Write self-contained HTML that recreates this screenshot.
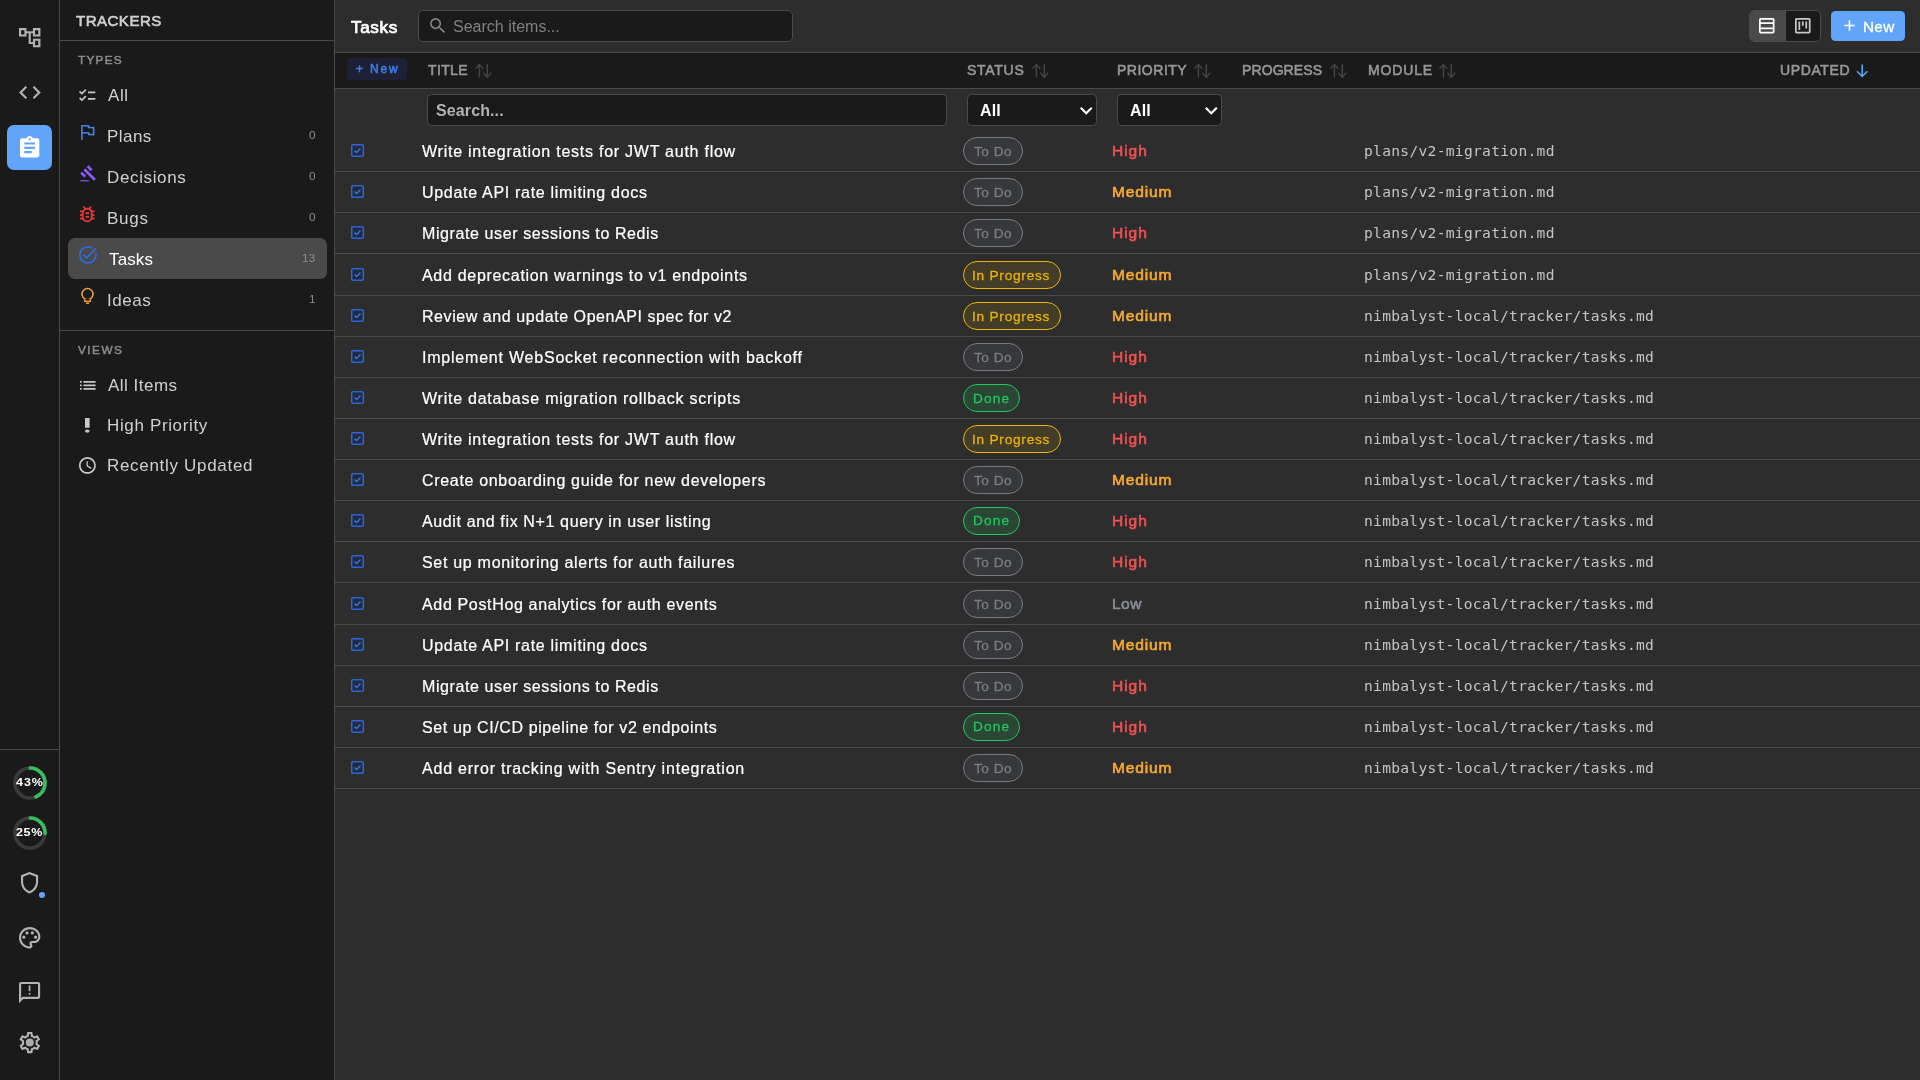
<!DOCTYPE html>
<html lang="en"><head><meta charset="utf-8"><title>Tasks - Trackers</title>
<style>
html,body{margin:0;padding:0;background:#2d2d2d;}
body{width:1920px;height:1080px;position:relative;overflow:hidden;font-family:"Liberation Sans",sans-serif;}
.b{position:absolute;}
.ic{position:absolute;display:block;overflow:visible;}
.t{position:absolute;white-space:pre;line-height:1;will-change:transform;}
</style></head>
<body>
<div class="b" style="left:0.00px;top:0.00px;width:59.00px;height:1080.00px;background:#1a1a1a"></div>
<div class="b" style="left:59.00px;top:0.00px;width:1.00px;height:1080.00px;background:#4a4a4a"></div>
<div class="b" style="left:60.00px;top:0.00px;width:274.00px;height:1080.00px;background:#1a1a1a"></div>
<div class="b" style="left:334.00px;top:0.00px;width:1.00px;height:1080.00px;background:#4a4a4a"></div>
<div class="b" style="left:335.00px;top:0.00px;width:1585.00px;height:1080.00px;background:#2d2d2d"></div>
<nav class="rail" aria-label="Navigation">
<svg class="ic" style="left:18.68px;top:27.60px;width:21.43px;height:19.29px" viewBox="2 3 20.000 18.000"><path fill="#b3b3b3" d="M22 11V3h-7v3H9V3H2v8h7V8h2v10h4v3h7v-8h-7v3h-2V8h2v3h7zM7 9H4V5h3v4zm10 6h3v4h-3v-4zm0-10h3v4h-3V5z"/></svg>
<svg class="ic" style="left:18.52px;top:85.97px;width:21.77px;height:13.06px" viewBox="2 6 20.000 12.000"><path fill="#b3b3b3" d="M9.4 16.6L4.8 12l4.6-4.6L8 6l-6 6 6 6 1.4-1.4zm5.2 0l4.6-4.6-4.6-4.6L16 6l6 6-6 6-1.4-1.4z"/></svg>
<div class="b" style="left:7.00px;top:125.00px;width:45.00px;height:45.00px;background:#60a5fa;border-radius:7px"></div>
<svg class="ic" style="left:20.08px;top:136.11px;width:19.34px;height:21.48px" viewBox="3 1 18.000 20.000"><path fill="#ffffff" d="M19 3h-4.18C14.4 1.84 13.3 1 12 1c-1.3 0-2.4.84-2.82 2H5c-1.1 0-2 .9-2 2v14c0 1.1.9 2 2 2h14c1.1 0 2-.9 2-2V5c0-1.1-.9-2-2-2zm-7 0c.55 0 1 .45 1 1s-.45 1-1 1-1-.45-1-1 .45-1 1-1zm2 14H7v-2h7v2zm3-4H7v-2h10v2zm0-4H7V7h10v2z"/></svg>
<div class="b" style="left:0.00px;top:749.00px;width:59.00px;height:1.00px;background:#4a4a4a"></div>
<svg class="ic" style="left:10px;top:762.70px;width:40px;height:40px" viewBox="0 0 40 40"><circle cx="20" cy="20" r="15.0" fill="none" stroke="#3a3a3a" stroke-width="3.6"/><circle cx="20" cy="20" r="15.0" fill="none" stroke="#36bf5f" stroke-width="3.6" stroke-linecap="round" stroke-dasharray="40.53 94.25" transform="rotate(-89 20 20)"/></svg>
<svg class="ic" style="left:10px;top:812.50px;width:40px;height:40px" viewBox="0 0 40 40"><circle cx="20" cy="20" r="15.0" fill="none" stroke="#3a3a3a" stroke-width="3.6"/><circle cx="20" cy="20" r="15.0" fill="none" stroke="#36bf5f" stroke-width="3.6" stroke-linecap="round" stroke-dasharray="23.56 94.25" transform="rotate(-89 20 20)"/></svg>
<span class="t " style="left:16.30px;top:776.62px;font-size:10.8px;font-weight:700;color:#ffffff;letter-spacing:0.833px;font-family:'Liberation Sans', sans-serif;transform:scaleX(1.16);transform-origin:0 50%;">43%</span>
<span class="t " style="left:15.82px;top:827.42px;font-size:10.8px;font-weight:700;color:#ffffff;letter-spacing:0.547px;font-family:'Liberation Sans', sans-serif;transform:scaleX(1.16);transform-origin:0 50%;">25%</span>
<svg class="ic" style="left:20.84px;top:871.65px;width:17.12px;height:21.40px" viewBox="4 2 16.000 20.000"><path fill="#b3b3b3" d="M12 2L4 5v6.09c0 5.05 3.41 9.76 8 10.91 4.59-1.15 8-5.860 8-10.91V5l-8-3zm6 9.090c0 4-2.55 7.7-6 8.83-3.45-1.13-6-4.820-6-8.83V6.390l6-2.250 6 2.250v4.7z"/></svg>
<div class="b" style="left:38.70px;top:891.70px;width:6.60px;height:6.60px;background:#60a5fa;border-radius:50%"></div>
<svg class="ic" style="left:18.85px;top:926.65px;width:21.40px;height:21.40px" viewBox="2 2 20.000 20.000"><path fill="#b3b3b3" d="M12 22C6.49 22 2 17.51 2 12S6.49 2 12 2s10 4.040 10 9c0 3.310-2.690 6-6 6h-1.770c-.28 0-.5.220-.5.5 0 .12.050.230.130.330.410.470.640 1.060.640 1.670A2.5 2.5 0 0 1 12 22zm0-18c-4.410 0-8 3.590-8 8s3.590 8 8 8c.28 0 .5-.22.5-.5a.54.54 0 0 0-.14-.35c-.41-.46-.63-1.050-.63-1.650a2.5 2.5 0 0 1 2.500-2.500H16c2.210 0 4-1.790 4-4 0-3.860-3.590-7-8-7zM6.500 10a1.500 1.500 0 1 0 0 3 1.500 1.500 0 0 0 0-3zM9.500 6a1.500 1.500 0 1 0 0 3 1.500 1.500 0 0 0 0-3zM14.500 6a1.500 1.500 0 1 0 0 3 1.500 1.500 0 0 0 0-3zM17.500 10a1.500 1.500 0 1 0 0 3 1.500 1.500 0 0 0 0-3z"/></svg>
<svg class="ic" style="left:18.98px;top:981.53px;width:21.15px;height:21.15px" viewBox="2 2 20.000 20.000"><path fill="#b3b3b3" d="M20 2H4c-1.100 0-1.990.9-1.990 2L2 22l4-4h14c1.100 0 2-.9 2-2V4c0-1.100-.9-2-2-2zm0 14H5.170l-.59.590-.58.580V4h16v12zm-8.8-3.6h1.6v1.6h-1.6zm0-7.2h1.6v5.6h-1.6z"/></svg>
<svg class="ic" style="left:18.74px;top:1031.76px;width:21.61px;height:21.19px" viewBox="1.8 2 20.400 20.000"><path fill="#b3b3b3" d="M19.430 12.980c.040-.320.070-.640.070-.980 0-.340-.030-.660-.070-.980l2.110-1.650c.190-.150.240-.420.120-.640l-2-3.460c-.090-.160-.260-.250-.440-.250-.060 0-.120.010-.170.030l-2.490 1c-.520-.4-1.080-.730-1.690-.980l-.380-2.650C14.460 2.180 14.250 2 14 2h-4c-.250 0-.460.180-.490.420l-.380 2.650c-.610.250-1.170.590-1.690.980l-2.490-1c-.060-.020-.120-.030-.180-.030-.170 0-.340.090-.430.250l-2 3.460c-.130.220-.070.490.120.640l2.110 1.650c-.040.320-.070.650-.070.980 0 .33.030.66.070.98l-2.110 1.650c-.190.150-.240.420-.120.640l2 3.460c.090.160.260.250.440.250.060 0 .12-.010.170-.030l2.490-1c.520.4 1.080.730 1.690.980l.380 2.650c.030.240.240.420.490.420h4c.250 0 .460-.180.490-.420l.380-2.650c.610-.250 1.170-.590 1.690-.980l2.490 1c.060.020.120.030.180.030.170 0 .340-.090.430-.250l2-3.460c.120-.220.070-.490-.120-.640l-2.110-1.650zm-1.980-1.710c.040.310.050.520.050.730 0 .210-.020.430-.050.730l-.14 1.130.890.7 1.080.840-.7 1.210-1.270-.510-1.040-.420-.9.680c-.430.320-.840.560-1.250.730l-1.060.430-.16 1.130-.2 1.350h-1.400l-.19-1.350-.16-1.130-1.060-.430c-.430-.180-.830-.410-1.230-.710l-.910-.7-1.060.430-1.270.510-.7-1.210 1.080-.840.890-.7-.14-1.130c-.030-.310-.050-.540-.050-.740s.020-.430.050-.730l.14-1.130-.890-.7-1.080-.840.7-1.210 1.270.510 1.040.420.9-.680c.430-.320.840-.560 1.250-.730l1.060-.430.16-1.130.2-1.350h1.390l.19 1.350.16 1.130 1.060.430c.430.180.830.410 1.230.710l.910.7 1.060-.430 1.270-.510.7 1.210-1.070.850-.890.7.14 1.130z"/><circle cx="12" cy="12" r="3.8" fill="#ababab"/></svg>
</nav>
<aside class="sidebar" aria-label="Trackers">
<span class="t " style="left:75.75px;top:13.17px;font-size:15px;font-weight:400;color:#cfcfcf;letter-spacing:0.509px;font-family:'Liberation Sans', sans-serif;-webkit-text-stroke:0.63px #cfcfcf;">TRACKERS</span>
<div class="b" style="left:60.00px;top:40.00px;width:274.00px;height:1.00px;background:#4a4a4a"></div>
<span class="t " style="left:78.10px;top:55.04px;font-size:11.8px;font-weight:400;color:#8c8c8c;letter-spacing:1.251px;font-family:'Liberation Sans', sans-serif;-webkit-text-stroke:0.50px #8c8c8c;">TYPES</span>
<svg class="ic" style="left:79.46px;top:88.65px;width:16.32px;height:12.30px" viewBox="2 3.93 20.000 15.070"><path fill="#c8c8c8" d="M22 7h-9v2h9V7zm0 8h-9v2h9v-2zM5.54 11L2 7.46l1.41-1.41 2.12 2.12 4.24-4.24 1.41 1.41L5.54 11zm0 8L2 15.46l1.41-1.41 2.12 2.12 4.24-4.24 1.41 1.41L5.54 19z"/></svg>
<span class="t " style="left:108.10px;top:86.70px;font-size:17px;font-weight:400;color:#d0d0d0;letter-spacing:0.554px;font-family:'Liberation Sans', sans-serif;">All</span>
<div class="b" style="left:68.00px;top:238.00px;width:259.00px;height:40.60px;background:#4a4a4a;border-radius:7px"></div>
<svg class="ic" style="left:81.00px;top:124.90px;width:13.60px;height:15.00px" viewBox="5 4 15.000 17.000" preserveAspectRatio="none"><path fill="#4a8df5" stroke="#1a1a1a" stroke-width="0.391" d="M12.36 6l.4 2H18v6h-3.36l-.4-2H7V6h5.36M14 4H5v17h2v-7h5.6l.4 2h7V6h-5.6L14 4z"/></svg>
<span class="t " style="left:107.46px;top:127.50px;font-size:17px;font-weight:400;color:#d0d0d0;letter-spacing:0.439px;font-family:'Liberation Sans', sans-serif;">Plans</span>
<span class="t " style="right:1604.00px;top:129.64px;font-size:11.8px;font-weight:400;color:#8c8c8c;letter-spacing:0.300px;font-family:'Liberation Sans', sans-serif;">0</span>
<svg class="ic" style="left:80.25px;top:164.55px;width:16.00px;height:16.60px" viewBox="1 1 21.200 22.000"><path fill="#8b5cf6" stroke="#1a1a1a" stroke-width="0.530" d="M1 21h12v2H1zM5.245 8.07l2.83-2.827 14.14 14.142-2.828 2.828zM12.317 1l5.657 5.656-2.83 2.83-5.654-5.66zM3.825 9.485l5.657 5.657-2.828 2.828-5.657-5.657z"/></svg>
<span class="t " style="left:107.46px;top:168.50px;font-size:17px;font-weight:400;color:#d0d0d0;letter-spacing:0.637px;font-family:'Liberation Sans', sans-serif;">Decisions</span>
<span class="t " style="right:1604.00px;top:170.64px;font-size:11.8px;font-weight:400;color:#8c8c8c;letter-spacing:0.300px;font-family:'Liberation Sans', sans-serif;">0</span>
<svg class="ic" style="left:80.23px;top:205.63px;width:14.53px;height:16.35px" viewBox="4 3 16.000 18.000"><path fill="#e53935" d="M20 8h-2.81c-.45-.78-1.07-1.45-1.82-1.96L17 4.41 15.59 3l-2.17 2.17C12.96 5.06 12.49 5 12 5c-.49 0-.96.06-1.41.17L8.41 3 7 4.41l1.62 1.63C7.88 6.55 7.26 7.22 6.81 8H4v2h2.09c-.05.33-.09.66-.09 1v1H4v2h2v1c0 .34.04.67.09 1H4v2h2.81c1.04 1.79 2.97 3 5.19 3s4.15-1.21 5.19-3H20v-2h-2.09c.05-.33.09-.66.09-1v-1h2v-2h-2v-1c0-.34-.04-.67-.09-1H20V8zm-4 4v3c0 .22-.03.47-.07.7l-.1.65-.37.65c-.72 1.24-2.04 2-3.46 2s-2.74-.77-3.46-2l-.37-.64-.1-.65C8.03 15.48 8 15.23 8 15v-4c0-.23.03-.48.07-.7l.1-.65.37-.65c.3-.52.72-.97 1.21-1.31l.57-.39.74-.18c.31-.08.63-.12.94-.12.32 0 .63.04.95.12l.68.16.61.42c.5.34.91.78 1.21 1.31l.38.65.1.65c.04.22.07.47.07.69v1zm-6 2h4v2h-4zm0-4h4v2h-4z"/></svg>
<span class="t " style="left:107.46px;top:209.60px;font-size:17px;font-weight:400;color:#d0d0d0;letter-spacing:0.779px;font-family:'Liberation Sans', sans-serif;">Bugs</span>
<span class="t " style="right:1604.00px;top:211.74px;font-size:11.8px;font-weight:400;color:#8c8c8c;letter-spacing:0.300px;font-family:'Liberation Sans', sans-serif;">0</span>
<svg class="ic" style="left:78.78px;top:245.52px;width:17.85px;height:17.85px" viewBox="2 2 20.000 20.000"><path fill="#3070ea" stroke="#4a4a4a" stroke-width="0.336" d="M22 5.18L10.59 16.6l-4.24-4.24 1.41-1.41 2.83 2.83 10-10L22 5.18zm-2.21 5.04c.13.57.21 1.17.21 1.78 0 4.42-3.58 8-8 8s-8-3.58-8-8 3.58-8 8-8c1.58 0 3.04.46 4.28 1.25l1.44-1.44C16.1 2.67 14.13 2 12 2 6.48 2 2 6.48 2 12s4.480 10 10 10 10-4.48 10-10c0-1.19-.22-2.33-.6-3.39l-1.61 1.61z"/></svg>
<span class="t " style="left:108.90px;top:251.30px;font-size:17px;font-weight:400;color:#ffffff;letter-spacing:0.139px;font-family:'Liberation Sans', sans-serif;">Tasks</span>
<span class="t " style="right:1604.00px;top:253.44px;font-size:11.8px;font-weight:400;color:#8c8c8c;letter-spacing:0.300px;font-family:'Liberation Sans', sans-serif;">13</span>
<svg class="ic" style="left:79px;top:286px;width:17px;height:20px" viewBox="79 286 17 20"><circle cx="87.5" cy="294.1" r="5.55" fill="none" stroke="#e6a23c" stroke-width="1.55"/><path fill="#e6a23c" d="M83.9 299.7h7.2v2.3h-7.2zM85.8 302.6h3.4v0.7a0.8 0.8 0 0 1-0.8 0.8h-1.8a0.8 0.8 0 0 1-0.8-0.8z"/><path fill="#1a1a1a" d="M85.4 299.0h4.2v1.6h-4.2z"/></svg>
<span class="t " style="left:107.30px;top:291.60px;font-size:17px;font-weight:400;color:#d0d0d0;letter-spacing:0.542px;font-family:'Liberation Sans', sans-serif;">Ideas</span>
<span class="t " style="right:1604.00px;top:293.74px;font-size:11.8px;font-weight:400;color:#8c8c8c;letter-spacing:0.300px;font-family:'Liberation Sans', sans-serif;">1</span>
<div class="b" style="left:60.00px;top:330.00px;width:274.00px;height:1.00px;background:#4a4a4a"></div>
<span class="t " style="left:78.00px;top:344.84px;font-size:11.8px;font-weight:400;color:#8c8c8c;letter-spacing:1.464px;font-family:'Liberation Sans', sans-serif;-webkit-text-stroke:0.50px #8c8c8c;">VIEWS</span>
<svg class="ic" style="left:79.86px;top:380.82px;width:15.58px;height:8.66px" viewBox="3 7 18.000 10.000"><path fill="#c8c8c8" d="M3 13h2v-2H3v2zm0 4h2v-2H3v2zm0-8h2V7H3v2zm4 4h14v-2H7v2zm0 4h14v-2H7v2zM7 7v2h14V7H7z"/></svg>
<span class="t " style="left:108.10px;top:376.60px;font-size:17px;font-weight:400;color:#d0d0d0;letter-spacing:0.483px;font-family:'Liberation Sans', sans-serif;">All Items</span>
<svg class="ic" style="left:85.20px;top:417.90px;width:4.60px;height:14.70px" viewBox="10 3 4.000 18.000" preserveAspectRatio="none"><path fill="#c8c8c8" d="M10 3h4v12h-4zM12 17a2 2 0 1 0 0 4 2 2 0 0 0 0-4z"/></svg>
<span class="t " style="left:106.86px;top:416.80px;font-size:17px;font-weight:400;color:#d0d0d0;letter-spacing:0.645px;font-family:'Liberation Sans', sans-serif;">High Priority</span>
<svg class="ic" style="left:79.25px;top:456.55px;width:16.80px;height:16.80px" viewBox="2 2 20.000 20.000"><path fill="#c8c8c8" d="M11.99 2C6.47 2 2 6.48 2 12s4.47 10 9.99 10C17.52 22 22 17.52 22 12S17.52 2 11.99 2zM12 20c-4.42 0-8-3.58-8-8s3.58-8 8-8 8 3.58 8 8-3.58 8-8 8zm.5-13H11v6l5.25 3.15.75-1.23-4.5-2.67z"/></svg>
<span class="t " style="left:106.86px;top:456.70px;font-size:17px;font-weight:400;color:#d0d0d0;letter-spacing:0.690px;font-family:'Liberation Sans', sans-serif;">Recently Updated</span>
</aside>
<main class="main">
<header class="toolbar">
<span class="t " style="left:350.90px;top:19.20px;font-size:17.2px;font-weight:400;color:#ffffff;letter-spacing:0.591px;font-family:'Liberation Sans', sans-serif;-webkit-text-stroke:0.72px #ffffff;">Tasks</span>
<div class="b" style="left:418.00px;top:10.00px;width:375.00px;height:32.00px;background:#1a1a1a;border:1px solid #4a4a4a;border-radius:5px;box-sizing:border-box"></div>
<svg class="ic" style="left:430.40px;top:18.40px;width:15.00px;height:15.00px" viewBox="3 3 17.490 17.490"><path fill="#8e8e8e" stroke="#1a1a1a" stroke-width="0.292" d="M15.5 14h-.79l-.28-.27C15.41 12.59 16 11.11 16 9.5 16 5.91 13.09 3 9.5 3S3 5.91 3 9.5 5.91 16 9.5 16c1.61 0 3.09-.59 4.23-1.570l.27.28v.79l5 4.990L20.490 19l-4.990-5zm-6 0C7.010 14 5 11.990 5 9.500S7.010 5 9.500 5 14 7.010 14 9.500 11.990 14 9.500 14z"/></svg>
<span class="t " style="left:452.98px;top:18.68px;font-size:16px;font-weight:400;color:#808080;letter-spacing:0.001px;font-family:'Liberation Sans', sans-serif;">Search items...</span>
<div class="b" style="left:1749.00px;top:10.00px;width:72.00px;height:32.00px;background:#1a1a1a;border:1px solid #4a4a4a;border-radius:5px;box-sizing:border-box;overflow:hidden"></div>
<div class="b" style="left:1750.00px;top:11.00px;width:36.00px;height:30.00px;background:#4a4a4a;border-radius:4px 0 0 4px"></div>
<svg class="ic" style="left:1759.23px;top:18.28px;width:15.55px;height:15.55px" viewBox="3 3 18.000 18.000"><path fill="#ffffff" d="M19 3H5c-1.100 0-2 .9-2 2v14c0 1.100.9 2 2 2h14c1.100 0 2-.9 2-2V5c0-1.100-.9-2-2-2zm0 2v3H5V5h14zm0 5v4H5v-4h14zM5 19v-3h14v3H5z"/></svg>
<svg class="ic" style="left:1794.59px;top:18.26px;width:15.58px;height:15.58px" viewBox="3 3 18.000 18.000"><path fill="#c8c8c8" d="M19 3H5c-1.100 0-2 .9-2 2v14c0 1.100.9 2 2 2h14c1.100 0 2-.9 2-2V5c0-1.100-.9-2-2-2zm0 16H5V5h14v14zM7 7h2v10H7zm4 0h2v5h-2zm4 0h2v8h-2z"/></svg>
<div class="b" style="left:1831.00px;top:11.00px;width:74.00px;height:30.00px;background:#60a5fa;border-radius:4.5px"></div>
<svg class="ic" style="left:1843.5px;top:19.9px;width:11px;height:11px" viewBox="0 0 11 11"><path d="M5.5 0.3V10.7M0.3 5.5H10.7" stroke="#fff" stroke-width="1.6" fill="none"/></svg>
<span class="t " style="left:1862.69px;top:19.13px;font-size:15.3px;font-weight:400;color:#ffffff;letter-spacing:0.293px;font-family:'Liberation Sans', sans-serif;-webkit-text-stroke:0.3px #fff;">New</span>
<div class="b" style="left:335.00px;top:52.00px;width:1585.00px;height:1.00px;background:#4a4a4a"></div>
</header>
<section class="table" role="table" aria-label="Tasks">
<div class="thead" role="row">
<div class="b" style="left:335.00px;top:53.00px;width:1585.00px;height:35.00px;background:#1a1a1a"></div>
<div class="b" style="left:335.00px;top:88.00px;width:1585.00px;height:1.00px;background:#4a4a4a"></div>
<div class="b" style="left:347.00px;top:57.80px;width:59.80px;height:22.20px;background:#1e2136;border-radius:4px"></div>
<span class="t " style="left:355.70px;top:63.74px;font-size:11.9px;font-weight:400;color:#3d80f2;letter-spacing:1.895px;font-family:'Liberation Sans', sans-serif;-webkit-text-stroke:0.50px #3d80f2;">+ New</span>
<span class="t " style="left:428.00px;top:63.46px;font-size:14px;font-weight:400;color:#969696;letter-spacing:0.344px;font-family:'Liberation Sans', sans-serif;-webkit-text-stroke:0.59px #969696;">TITLE</span>
<svg class="ic" style="left:475.25px;top:63px;width:17px;height:16px" viewBox="0 0 17 16"><path d="M4.4 14.6V1.6M0.5 5.8L4.4 1.5L8.3 5.8M12.3 1.2V14.3M8.4 9.8L12.3 14.4L16.2 9.8" stroke="#444444" stroke-width="1.5" fill="none"/></svg>
<span class="t " style="left:966.81px;top:63.46px;font-size:14px;font-weight:400;color:#969696;letter-spacing:0.726px;font-family:'Liberation Sans', sans-serif;-webkit-text-stroke:0.59px #969696;">STATUS</span>
<svg class="ic" style="left:1031.60px;top:63px;width:17px;height:16px" viewBox="0 0 17 16"><path d="M4.4 14.6V1.6M0.5 5.8L4.4 1.5L8.3 5.8M12.3 1.2V14.3M8.4 9.8L12.3 14.4L16.2 9.8" stroke="#444444" stroke-width="1.5" fill="none"/></svg>
<span class="t " style="left:1117.40px;top:63.46px;font-size:14px;font-weight:400;color:#969696;letter-spacing:0.509px;font-family:'Liberation Sans', sans-serif;-webkit-text-stroke:0.59px #969696;">PRIORITY</span>
<svg class="ic" style="left:1194.00px;top:63px;width:17px;height:16px" viewBox="0 0 17 16"><path d="M4.4 14.6V1.6M0.5 5.8L4.4 1.5L8.3 5.8M12.3 1.2V14.3M8.4 9.8L12.3 14.4L16.2 9.8" stroke="#444444" stroke-width="1.5" fill="none"/></svg>
<span class="t " style="left:1241.88px;top:63.46px;font-size:14px;font-weight:400;color:#969696;letter-spacing:0.098px;font-family:'Liberation Sans', sans-serif;-webkit-text-stroke:0.59px #969696;">PROGRESS</span>
<svg class="ic" style="left:1329.50px;top:63px;width:17px;height:16px" viewBox="0 0 17 16"><path d="M4.4 14.6V1.6M0.5 5.8L4.4 1.5L8.3 5.8M12.3 1.2V14.3M8.4 9.8L12.3 14.4L16.2 9.8" stroke="#444444" stroke-width="1.5" fill="none"/></svg>
<span class="t " style="left:1367.88px;top:63.46px;font-size:14px;font-weight:400;color:#969696;letter-spacing:0.845px;font-family:'Liberation Sans', sans-serif;-webkit-text-stroke:0.59px #969696;">MODULE</span>
<svg class="ic" style="left:1439.20px;top:63px;width:17px;height:16px" viewBox="0 0 17 16"><path d="M4.4 14.6V1.6M0.5 5.8L4.4 1.5L8.3 5.8M12.3 1.2V14.3M8.4 9.8L12.3 14.4L16.2 9.8" stroke="#444444" stroke-width="1.5" fill="none"/></svg>
<span class="t " style="left:1780.36px;top:63.46px;font-size:14px;font-weight:400;color:#969696;letter-spacing:0.629px;font-family:'Liberation Sans', sans-serif;-webkit-text-stroke:0.59px #969696;">UPDATED</span>
<svg class="ic" style="left:1856.4px;top:64px;width:12.4px;height:13.6px" viewBox="0 0 12.4 13.6"><path d="M6.2 0.6V12.4M1 7.3L6.2 12.5L11.4 7.3" stroke="#60a5fa" stroke-width="1.6" fill="none"/></svg>
</div>
<div class="filters" role="row">
<div class="b" style="left:427.00px;top:94.00px;width:520.00px;height:32.00px;background:#1a1a1a;border:1px solid #4a4a4a;border-radius:4.5px;box-sizing:border-box"></div>
<span class="t " style="left:436.20px;top:102.58px;font-size:16px;font-weight:700;color:#b0b2b6;letter-spacing:0.112px;font-family:'Liberation Sans', sans-serif;">Search...</span>
<div class="b" style="left:967.00px;top:94.00px;width:130.00px;height:32.00px;background:#1a1a1a;border:1px solid #4a4a4a;border-radius:4.5px;box-sizing:border-box"></div>
<span class="t " style="left:979.69px;top:103.48px;font-size:16px;font-weight:700;color:#ffffff;letter-spacing:0.109px;font-family:'Liberation Sans', sans-serif;">All</span>
<svg class="ic" style="left:1079.61px;top:106.54px;width:12.49px;height:7.71px" viewBox="6 8.59 12.000 7.410"><path fill="#ffffff" d="M16.590 8.590L12 13.170 7.410 8.590 6 10l6 6 6-6z"/></svg>
<div class="b" style="left:1117.00px;top:94.00px;width:105.00px;height:32.00px;background:#1a1a1a;border:1px solid #4a4a4a;border-radius:4.5px;box-sizing:border-box"></div>
<span class="t " style="left:1130.49px;top:103.48px;font-size:16px;font-weight:700;color:#ffffff;letter-spacing:0.109px;font-family:'Liberation Sans', sans-serif;">All</span>
<svg class="ic" style="left:1204.63px;top:106.53px;width:12.54px;height:7.74px" viewBox="6 8.59 12.000 7.410"><path fill="#ffffff" d="M16.590 8.590L12 13.170 7.410 8.590 6 10l6 6 6-6z"/></svg>
</div>
<div class="row" role="row">
<div class="b" style="left:335.00px;top:171.00px;width:1585.00px;height:1.00px;background:#4a4a4a"></div>
<svg class="ic" style="left:350px;top:142.90px;width:15px;height:15px" viewBox="0 0 15 15"><rect x="1.7" y="1.7" width="11.6" height="11.6" rx="1" fill="#222a40" stroke="#2c64d6" stroke-width="1.55"/><path d="M4.5 7.6L6.6 9.6L10.5 5.6" fill="none" stroke="#3a72e0" stroke-width="1.4"/></svg>
<span class="t " style="left:421.88px;top:144.43px;font-size:16px;font-weight:400;color:#ffffff;letter-spacing:0.752px;font-family:'Liberation Sans', sans-serif;-webkit-text-stroke:0.22px #fff;">Write integration tests for JWT auth flow</span>
<div class="b" style="left:963.00px;top:137.05px;width:60.00px;height:27.50px;background:rgba(125,128,136,0.13);border:1px solid #787c85;border-radius:14px;box-sizing:border-box"></div>
<span class="t " style="left:974.30px;top:145.41px;font-size:13.6px;font-weight:400;color:#787c85;letter-spacing:0.525px;font-family:'Liberation Sans', sans-serif;-webkit-text-stroke:0.3px #787c85;">To Do</span>
<span class="t " style="left:1111.94px;top:142.83px;font-size:15.5px;font-weight:400;color:#ee5050;letter-spacing:0.976px;font-family:'Liberation Sans', sans-serif;-webkit-text-stroke:0.65px #ee5050;">High</span>
<span class="t " style="left:1364.00px;top:143.79px;font-size:14.6px;font-weight:400;color:#c4c4c4;letter-spacing:0.299px;font-family:'DejaVu Sans Mono', 'Liberation Mono', monospace;">plans/v2-migration.md</span>
</div>
<div class="row" role="row">
<div class="b" style="left:335.00px;top:212.00px;width:1585.00px;height:1.00px;background:#4a4a4a"></div>
<svg class="ic" style="left:350px;top:183.90px;width:15px;height:15px" viewBox="0 0 15 15"><rect x="1.7" y="1.7" width="11.6" height="11.6" rx="1" fill="#222a40" stroke="#2c64d6" stroke-width="1.55"/><path d="M4.5 7.6L6.6 9.6L10.5 5.6" fill="none" stroke="#3a72e0" stroke-width="1.4"/></svg>
<span class="t " style="left:421.85px;top:185.43px;font-size:16px;font-weight:400;color:#ffffff;letter-spacing:0.699px;font-family:'Liberation Sans', sans-serif;-webkit-text-stroke:0.22px #fff;">Update API rate limiting docs</span>
<div class="b" style="left:963.00px;top:178.05px;width:60.00px;height:27.50px;background:rgba(125,128,136,0.13);border:1px solid #787c85;border-radius:14px;box-sizing:border-box"></div>
<span class="t " style="left:974.30px;top:186.41px;font-size:13.6px;font-weight:400;color:#787c85;letter-spacing:0.525px;font-family:'Liberation Sans', sans-serif;-webkit-text-stroke:0.3px #787c85;">To Do</span>
<span class="t " style="left:1111.94px;top:183.83px;font-size:15.5px;font-weight:400;color:#f5a92e;letter-spacing:0.879px;font-family:'Liberation Sans', sans-serif;-webkit-text-stroke:0.65px #f5a92e;">Medium</span>
<span class="t " style="left:1364.00px;top:184.79px;font-size:14.6px;font-weight:400;color:#c4c4c4;letter-spacing:0.299px;font-family:'DejaVu Sans Mono', 'Liberation Mono', monospace;">plans/v2-migration.md</span>
</div>
<div class="row" role="row">
<div class="b" style="left:335.00px;top:253.00px;width:1585.00px;height:1.00px;background:#4a4a4a"></div>
<svg class="ic" style="left:350px;top:224.90px;width:15px;height:15px" viewBox="0 0 15 15"><rect x="1.7" y="1.7" width="11.6" height="11.6" rx="1" fill="#222a40" stroke="#2c64d6" stroke-width="1.55"/><path d="M4.5 7.6L6.6 9.6L10.5 5.6" fill="none" stroke="#3a72e0" stroke-width="1.4"/></svg>
<span class="t " style="left:421.81px;top:226.43px;font-size:16px;font-weight:400;color:#ffffff;letter-spacing:0.603px;font-family:'Liberation Sans', sans-serif;-webkit-text-stroke:0.22px #fff;">Migrate user sessions to Redis</span>
<div class="b" style="left:963.00px;top:219.05px;width:60.00px;height:27.50px;background:rgba(125,128,136,0.13);border:1px solid #787c85;border-radius:14px;box-sizing:border-box"></div>
<span class="t " style="left:974.30px;top:227.41px;font-size:13.6px;font-weight:400;color:#787c85;letter-spacing:0.525px;font-family:'Liberation Sans', sans-serif;-webkit-text-stroke:0.3px #787c85;">To Do</span>
<span class="t " style="left:1111.94px;top:224.83px;font-size:15.5px;font-weight:400;color:#ee5050;letter-spacing:0.976px;font-family:'Liberation Sans', sans-serif;-webkit-text-stroke:0.65px #ee5050;">High</span>
<span class="t " style="left:1364.00px;top:225.79px;font-size:14.6px;font-weight:400;color:#c4c4c4;letter-spacing:0.299px;font-family:'DejaVu Sans Mono', 'Liberation Mono', monospace;">plans/v2-migration.md</span>
</div>
<div class="row" role="row">
<div class="b" style="left:335.00px;top:295.00px;width:1585.00px;height:1.00px;background:#4a4a4a"></div>
<svg class="ic" style="left:350px;top:266.90px;width:15px;height:15px" viewBox="0 0 15 15"><rect x="1.7" y="1.7" width="11.6" height="11.6" rx="1" fill="#222a40" stroke="#2c64d6" stroke-width="1.55"/><path d="M4.5 7.6L6.6 9.6L10.5 5.6" fill="none" stroke="#3a72e0" stroke-width="1.4"/></svg>
<span class="t " style="left:421.87px;top:268.43px;font-size:16px;font-weight:400;color:#ffffff;letter-spacing:0.695px;font-family:'Liberation Sans', sans-serif;-webkit-text-stroke:0.22px #fff;">Add deprecation warnings to v1 endpoints</span>
<div class="b" style="left:963.00px;top:261.05px;width:97.80px;height:27.50px;background:rgba(234,179,8,0.12);border:1px solid #eab308;border-radius:14px;box-sizing:border-box"></div>
<span class="t " style="left:971.89px;top:269.41px;font-size:13.6px;font-weight:400;color:#eab308;letter-spacing:0.786px;font-family:'Liberation Sans', sans-serif;-webkit-text-stroke:0.3px #eab308;">In Progress</span>
<span class="t " style="left:1111.94px;top:266.83px;font-size:15.5px;font-weight:400;color:#f5a92e;letter-spacing:0.879px;font-family:'Liberation Sans', sans-serif;-webkit-text-stroke:0.65px #f5a92e;">Medium</span>
<span class="t " style="left:1364.00px;top:267.79px;font-size:14.6px;font-weight:400;color:#c4c4c4;letter-spacing:0.299px;font-family:'DejaVu Sans Mono', 'Liberation Mono', monospace;">plans/v2-migration.md</span>
</div>
<div class="row" role="row">
<div class="b" style="left:335.00px;top:336.00px;width:1585.00px;height:1.00px;background:#4a4a4a"></div>
<svg class="ic" style="left:350px;top:307.90px;width:15px;height:15px" viewBox="0 0 15 15"><rect x="1.7" y="1.7" width="11.6" height="11.6" rx="1" fill="#222a40" stroke="#2c64d6" stroke-width="1.55"/><path d="M4.5 7.6L6.6 9.6L10.5 5.6" fill="none" stroke="#3a72e0" stroke-width="1.4"/></svg>
<span class="t " style="left:421.81px;top:309.43px;font-size:16px;font-weight:400;color:#ffffff;letter-spacing:0.566px;font-family:'Liberation Sans', sans-serif;-webkit-text-stroke:0.22px #fff;">Review and update OpenAPI spec for v2</span>
<div class="b" style="left:963.00px;top:302.05px;width:97.80px;height:27.50px;background:rgba(234,179,8,0.12);border:1px solid #eab308;border-radius:14px;box-sizing:border-box"></div>
<span class="t " style="left:971.89px;top:310.41px;font-size:13.6px;font-weight:400;color:#eab308;letter-spacing:0.786px;font-family:'Liberation Sans', sans-serif;-webkit-text-stroke:0.3px #eab308;">In Progress</span>
<span class="t " style="left:1111.94px;top:307.83px;font-size:15.5px;font-weight:400;color:#f5a92e;letter-spacing:0.879px;font-family:'Liberation Sans', sans-serif;-webkit-text-stroke:0.65px #f5a92e;">Medium</span>
<span class="t " style="left:1364.00px;top:308.79px;font-size:14.6px;font-weight:400;color:#c4c4c4;letter-spacing:0.282px;font-family:'DejaVu Sans Mono', 'Liberation Mono', monospace;">nimbalyst-local/tracker/tasks.md</span>
</div>
<div class="row" role="row">
<div class="b" style="left:335.00px;top:377.00px;width:1585.00px;height:1.00px;background:#4a4a4a"></div>
<svg class="ic" style="left:350px;top:348.90px;width:15px;height:15px" viewBox="0 0 15 15"><rect x="1.7" y="1.7" width="11.6" height="11.6" rx="1" fill="#222a40" stroke="#2c64d6" stroke-width="1.55"/><path d="M4.5 7.6L6.6 9.6L10.5 5.6" fill="none" stroke="#3a72e0" stroke-width="1.4"/></svg>
<span class="t " style="left:421.69px;top:350.43px;font-size:16px;font-weight:400;color:#ffffff;letter-spacing:0.786px;font-family:'Liberation Sans', sans-serif;-webkit-text-stroke:0.22px #fff;">Implement WebSocket reconnection with backoff</span>
<div class="b" style="left:963.00px;top:343.05px;width:60.00px;height:27.50px;background:rgba(125,128,136,0.13);border:1px solid #787c85;border-radius:14px;box-sizing:border-box"></div>
<span class="t " style="left:974.30px;top:351.41px;font-size:13.6px;font-weight:400;color:#787c85;letter-spacing:0.525px;font-family:'Liberation Sans', sans-serif;-webkit-text-stroke:0.3px #787c85;">To Do</span>
<span class="t " style="left:1111.94px;top:348.83px;font-size:15.5px;font-weight:400;color:#ee5050;letter-spacing:0.976px;font-family:'Liberation Sans', sans-serif;-webkit-text-stroke:0.65px #ee5050;">High</span>
<span class="t " style="left:1364.00px;top:349.79px;font-size:14.6px;font-weight:400;color:#c4c4c4;letter-spacing:0.282px;font-family:'DejaVu Sans Mono', 'Liberation Mono', monospace;">nimbalyst-local/tracker/tasks.md</span>
</div>
<div class="row" role="row">
<div class="b" style="left:335.00px;top:418.00px;width:1585.00px;height:1.00px;background:#4a4a4a"></div>
<svg class="ic" style="left:350px;top:389.90px;width:15px;height:15px" viewBox="0 0 15 15"><rect x="1.7" y="1.7" width="11.6" height="11.6" rx="1" fill="#222a40" stroke="#2c64d6" stroke-width="1.55"/><path d="M4.5 7.6L6.6 9.6L10.5 5.6" fill="none" stroke="#3a72e0" stroke-width="1.4"/></svg>
<span class="t " style="left:421.88px;top:391.43px;font-size:16px;font-weight:400;color:#ffffff;letter-spacing:0.759px;font-family:'Liberation Sans', sans-serif;-webkit-text-stroke:0.22px #fff;">Write database migration rollback scripts</span>
<div class="b" style="left:963.00px;top:384.05px;width:57.00px;height:27.50px;background:rgba(34,197,94,0.17);border:1px solid #22c55e;border-radius:14px;box-sizing:border-box"></div>
<span class="t " style="left:972.76px;top:392.41px;font-size:13.6px;font-weight:400;color:#22c55e;letter-spacing:1.193px;font-family:'Liberation Sans', sans-serif;-webkit-text-stroke:0.3px #22c55e;">Done</span>
<span class="t " style="left:1111.94px;top:389.83px;font-size:15.5px;font-weight:400;color:#ee5050;letter-spacing:0.976px;font-family:'Liberation Sans', sans-serif;-webkit-text-stroke:0.65px #ee5050;">High</span>
<span class="t " style="left:1364.00px;top:390.79px;font-size:14.6px;font-weight:400;color:#c4c4c4;letter-spacing:0.282px;font-family:'DejaVu Sans Mono', 'Liberation Mono', monospace;">nimbalyst-local/tracker/tasks.md</span>
</div>
<div class="row" role="row">
<div class="b" style="left:335.00px;top:459.00px;width:1585.00px;height:1.00px;background:#4a4a4a"></div>
<svg class="ic" style="left:350px;top:430.90px;width:15px;height:15px" viewBox="0 0 15 15"><rect x="1.7" y="1.7" width="11.6" height="11.6" rx="1" fill="#222a40" stroke="#2c64d6" stroke-width="1.55"/><path d="M4.5 7.6L6.6 9.6L10.5 5.6" fill="none" stroke="#3a72e0" stroke-width="1.4"/></svg>
<span class="t " style="left:421.88px;top:432.43px;font-size:16px;font-weight:400;color:#ffffff;letter-spacing:0.752px;font-family:'Liberation Sans', sans-serif;-webkit-text-stroke:0.22px #fff;">Write integration tests for JWT auth flow</span>
<div class="b" style="left:963.00px;top:425.05px;width:97.80px;height:27.50px;background:rgba(234,179,8,0.12);border:1px solid #eab308;border-radius:14px;box-sizing:border-box"></div>
<span class="t " style="left:971.89px;top:433.41px;font-size:13.6px;font-weight:400;color:#eab308;letter-spacing:0.786px;font-family:'Liberation Sans', sans-serif;-webkit-text-stroke:0.3px #eab308;">In Progress</span>
<span class="t " style="left:1111.94px;top:430.83px;font-size:15.5px;font-weight:400;color:#ee5050;letter-spacing:0.976px;font-family:'Liberation Sans', sans-serif;-webkit-text-stroke:0.65px #ee5050;">High</span>
<span class="t " style="left:1364.00px;top:431.79px;font-size:14.6px;font-weight:400;color:#c4c4c4;letter-spacing:0.282px;font-family:'DejaVu Sans Mono', 'Liberation Mono', monospace;">nimbalyst-local/tracker/tasks.md</span>
</div>
<div class="row" role="row">
<div class="b" style="left:335.00px;top:500.00px;width:1585.00px;height:1.00px;background:#4a4a4a"></div>
<svg class="ic" style="left:350px;top:471.90px;width:15px;height:15px" viewBox="0 0 15 15"><rect x="1.7" y="1.7" width="11.6" height="11.6" rx="1" fill="#222a40" stroke="#2c64d6" stroke-width="1.55"/><path d="M4.5 7.6L6.6 9.6L10.5 5.6" fill="none" stroke="#3a72e0" stroke-width="1.4"/></svg>
<span class="t " style="left:422.43px;top:473.43px;font-size:16px;font-weight:400;color:#ffffff;letter-spacing:0.674px;font-family:'Liberation Sans', sans-serif;-webkit-text-stroke:0.22px #fff;">Create onboarding guide for new developers</span>
<div class="b" style="left:963.00px;top:466.05px;width:60.00px;height:27.50px;background:rgba(125,128,136,0.13);border:1px solid #787c85;border-radius:14px;box-sizing:border-box"></div>
<span class="t " style="left:974.30px;top:474.41px;font-size:13.6px;font-weight:400;color:#787c85;letter-spacing:0.525px;font-family:'Liberation Sans', sans-serif;-webkit-text-stroke:0.3px #787c85;">To Do</span>
<span class="t " style="left:1111.94px;top:471.83px;font-size:15.5px;font-weight:400;color:#f5a92e;letter-spacing:0.879px;font-family:'Liberation Sans', sans-serif;-webkit-text-stroke:0.65px #f5a92e;">Medium</span>
<span class="t " style="left:1364.00px;top:472.79px;font-size:14.6px;font-weight:400;color:#c4c4c4;letter-spacing:0.282px;font-family:'DejaVu Sans Mono', 'Liberation Mono', monospace;">nimbalyst-local/tracker/tasks.md</span>
</div>
<div class="row" role="row">
<div class="b" style="left:335.00px;top:541.00px;width:1585.00px;height:1.00px;background:#4a4a4a"></div>
<svg class="ic" style="left:350px;top:512.90px;width:15px;height:15px" viewBox="0 0 15 15"><rect x="1.7" y="1.7" width="11.6" height="11.6" rx="1" fill="#222a40" stroke="#2c64d6" stroke-width="1.55"/><path d="M4.5 7.6L6.6 9.6L10.5 5.6" fill="none" stroke="#3a72e0" stroke-width="1.4"/></svg>
<span class="t " style="left:421.87px;top:514.43px;font-size:16px;font-weight:400;color:#ffffff;letter-spacing:0.631px;font-family:'Liberation Sans', sans-serif;-webkit-text-stroke:0.22px #fff;">Audit and fix N+1 query in user listing</span>
<div class="b" style="left:963.00px;top:507.05px;width:57.00px;height:27.50px;background:rgba(34,197,94,0.17);border:1px solid #22c55e;border-radius:14px;box-sizing:border-box"></div>
<span class="t " style="left:972.76px;top:514.41px;font-size:13.6px;font-weight:400;color:#22c55e;letter-spacing:1.193px;font-family:'Liberation Sans', sans-serif;-webkit-text-stroke:0.3px #22c55e;">Done</span>
<span class="t " style="left:1111.94px;top:512.83px;font-size:15.5px;font-weight:400;color:#ee5050;letter-spacing:0.976px;font-family:'Liberation Sans', sans-serif;-webkit-text-stroke:0.65px #ee5050;">High</span>
<span class="t " style="left:1364.00px;top:513.79px;font-size:14.6px;font-weight:400;color:#c4c4c4;letter-spacing:0.282px;font-family:'DejaVu Sans Mono', 'Liberation Mono', monospace;">nimbalyst-local/tracker/tasks.md</span>
</div>
<div class="row" role="row">
<div class="b" style="left:335.00px;top:582.00px;width:1585.00px;height:1.00px;background:#4a4a4a"></div>
<svg class="ic" style="left:350px;top:553.90px;width:15px;height:15px" viewBox="0 0 15 15"><rect x="1.7" y="1.7" width="11.6" height="11.6" rx="1" fill="#222a40" stroke="#2c64d6" stroke-width="1.55"/><path d="M4.5 7.6L6.6 9.6L10.5 5.6" fill="none" stroke="#3a72e0" stroke-width="1.4"/></svg>
<span class="t " style="left:422.30px;top:555.43px;font-size:16px;font-weight:400;color:#ffffff;letter-spacing:0.703px;font-family:'Liberation Sans', sans-serif;-webkit-text-stroke:0.22px #fff;">Set up monitoring alerts for auth failures</span>
<div class="b" style="left:963.00px;top:548.05px;width:60.00px;height:27.50px;background:rgba(125,128,136,0.13);border:1px solid #787c85;border-radius:14px;box-sizing:border-box"></div>
<span class="t " style="left:974.30px;top:556.41px;font-size:13.6px;font-weight:400;color:#787c85;letter-spacing:0.525px;font-family:'Liberation Sans', sans-serif;-webkit-text-stroke:0.3px #787c85;">To Do</span>
<span class="t " style="left:1111.94px;top:553.83px;font-size:15.5px;font-weight:400;color:#ee5050;letter-spacing:0.976px;font-family:'Liberation Sans', sans-serif;-webkit-text-stroke:0.65px #ee5050;">High</span>
<span class="t " style="left:1364.00px;top:554.79px;font-size:14.6px;font-weight:400;color:#c4c4c4;letter-spacing:0.282px;font-family:'DejaVu Sans Mono', 'Liberation Mono', monospace;">nimbalyst-local/tracker/tasks.md</span>
</div>
<div class="row" role="row">
<div class="b" style="left:335.00px;top:624.00px;width:1585.00px;height:1.00px;background:#4a4a4a"></div>
<svg class="ic" style="left:350px;top:595.90px;width:15px;height:15px" viewBox="0 0 15 15"><rect x="1.7" y="1.7" width="11.6" height="11.6" rx="1" fill="#222a40" stroke="#2c64d6" stroke-width="1.55"/><path d="M4.5 7.6L6.6 9.6L10.5 5.6" fill="none" stroke="#3a72e0" stroke-width="1.4"/></svg>
<span class="t " style="left:421.87px;top:597.43px;font-size:16px;font-weight:400;color:#ffffff;letter-spacing:0.655px;font-family:'Liberation Sans', sans-serif;-webkit-text-stroke:0.22px #fff;">Add PostHog analytics for auth events</span>
<div class="b" style="left:963.00px;top:590.05px;width:60.00px;height:27.50px;background:rgba(125,128,136,0.13);border:1px solid #787c85;border-radius:14px;box-sizing:border-box"></div>
<span class="t " style="left:974.30px;top:598.41px;font-size:13.6px;font-weight:400;color:#787c85;letter-spacing:0.525px;font-family:'Liberation Sans', sans-serif;-webkit-text-stroke:0.3px #787c85;">To Do</span>
<span class="t " style="left:1111.94px;top:595.83px;font-size:15.5px;font-weight:400;color:#888c95;letter-spacing:0.476px;font-family:'Liberation Sans', sans-serif;-webkit-text-stroke:0.65px #888c95;">Low</span>
<span class="t " style="left:1364.00px;top:596.79px;font-size:14.6px;font-weight:400;color:#c4c4c4;letter-spacing:0.282px;font-family:'DejaVu Sans Mono', 'Liberation Mono', monospace;">nimbalyst-local/tracker/tasks.md</span>
</div>
<div class="row" role="row">
<div class="b" style="left:335.00px;top:665.00px;width:1585.00px;height:1.00px;background:#4a4a4a"></div>
<svg class="ic" style="left:350px;top:636.90px;width:15px;height:15px" viewBox="0 0 15 15"><rect x="1.7" y="1.7" width="11.6" height="11.6" rx="1" fill="#222a40" stroke="#2c64d6" stroke-width="1.55"/><path d="M4.5 7.6L6.6 9.6L10.5 5.6" fill="none" stroke="#3a72e0" stroke-width="1.4"/></svg>
<span class="t " style="left:421.85px;top:638.43px;font-size:16px;font-weight:400;color:#ffffff;letter-spacing:0.699px;font-family:'Liberation Sans', sans-serif;-webkit-text-stroke:0.22px #fff;">Update API rate limiting docs</span>
<div class="b" style="left:963.00px;top:631.05px;width:60.00px;height:27.50px;background:rgba(125,128,136,0.13);border:1px solid #787c85;border-radius:14px;box-sizing:border-box"></div>
<span class="t " style="left:974.30px;top:639.41px;font-size:13.6px;font-weight:400;color:#787c85;letter-spacing:0.525px;font-family:'Liberation Sans', sans-serif;-webkit-text-stroke:0.3px #787c85;">To Do</span>
<span class="t " style="left:1111.94px;top:636.83px;font-size:15.5px;font-weight:400;color:#f5a92e;letter-spacing:0.879px;font-family:'Liberation Sans', sans-serif;-webkit-text-stroke:0.65px #f5a92e;">Medium</span>
<span class="t " style="left:1364.00px;top:637.79px;font-size:14.6px;font-weight:400;color:#c4c4c4;letter-spacing:0.282px;font-family:'DejaVu Sans Mono', 'Liberation Mono', monospace;">nimbalyst-local/tracker/tasks.md</span>
</div>
<div class="row" role="row">
<div class="b" style="left:335.00px;top:706.00px;width:1585.00px;height:1.00px;background:#4a4a4a"></div>
<svg class="ic" style="left:350px;top:677.90px;width:15px;height:15px" viewBox="0 0 15 15"><rect x="1.7" y="1.7" width="11.6" height="11.6" rx="1" fill="#222a40" stroke="#2c64d6" stroke-width="1.55"/><path d="M4.5 7.6L6.6 9.6L10.5 5.6" fill="none" stroke="#3a72e0" stroke-width="1.4"/></svg>
<span class="t " style="left:421.81px;top:679.43px;font-size:16px;font-weight:400;color:#ffffff;letter-spacing:0.603px;font-family:'Liberation Sans', sans-serif;-webkit-text-stroke:0.22px #fff;">Migrate user sessions to Redis</span>
<div class="b" style="left:963.00px;top:672.05px;width:60.00px;height:27.50px;background:rgba(125,128,136,0.13);border:1px solid #787c85;border-radius:14px;box-sizing:border-box"></div>
<span class="t " style="left:974.30px;top:680.41px;font-size:13.6px;font-weight:400;color:#787c85;letter-spacing:0.525px;font-family:'Liberation Sans', sans-serif;-webkit-text-stroke:0.3px #787c85;">To Do</span>
<span class="t " style="left:1111.94px;top:677.83px;font-size:15.5px;font-weight:400;color:#ee5050;letter-spacing:0.976px;font-family:'Liberation Sans', sans-serif;-webkit-text-stroke:0.65px #ee5050;">High</span>
<span class="t " style="left:1364.00px;top:678.79px;font-size:14.6px;font-weight:400;color:#c4c4c4;letter-spacing:0.282px;font-family:'DejaVu Sans Mono', 'Liberation Mono', monospace;">nimbalyst-local/tracker/tasks.md</span>
</div>
<div class="row" role="row">
<div class="b" style="left:335.00px;top:747.00px;width:1585.00px;height:1.00px;background:#4a4a4a"></div>
<svg class="ic" style="left:350px;top:718.90px;width:15px;height:15px" viewBox="0 0 15 15"><rect x="1.7" y="1.7" width="11.6" height="11.6" rx="1" fill="#222a40" stroke="#2c64d6" stroke-width="1.55"/><path d="M4.5 7.6L6.6 9.6L10.5 5.6" fill="none" stroke="#3a72e0" stroke-width="1.4"/></svg>
<span class="t " style="left:422.30px;top:720.43px;font-size:16px;font-weight:400;color:#ffffff;letter-spacing:0.611px;font-family:'Liberation Sans', sans-serif;-webkit-text-stroke:0.22px #fff;">Set up CI/CD pipeline for v2 endpoints</span>
<div class="b" style="left:963.00px;top:713.05px;width:57.00px;height:27.50px;background:rgba(34,197,94,0.17);border:1px solid #22c55e;border-radius:14px;box-sizing:border-box"></div>
<span class="t " style="left:972.76px;top:720.41px;font-size:13.6px;font-weight:400;color:#22c55e;letter-spacing:1.193px;font-family:'Liberation Sans', sans-serif;-webkit-text-stroke:0.3px #22c55e;">Done</span>
<span class="t " style="left:1111.94px;top:718.83px;font-size:15.5px;font-weight:400;color:#ee5050;letter-spacing:0.976px;font-family:'Liberation Sans', sans-serif;-webkit-text-stroke:0.65px #ee5050;">High</span>
<span class="t " style="left:1364.00px;top:719.79px;font-size:14.6px;font-weight:400;color:#c4c4c4;letter-spacing:0.282px;font-family:'DejaVu Sans Mono', 'Liberation Mono', monospace;">nimbalyst-local/tracker/tasks.md</span>
</div>
<div class="row" role="row">
<div class="b" style="left:335.00px;top:788.00px;width:1585.00px;height:1.00px;background:#4a4a4a"></div>
<svg class="ic" style="left:350px;top:759.90px;width:15px;height:15px" viewBox="0 0 15 15"><rect x="1.7" y="1.7" width="11.6" height="11.6" rx="1" fill="#222a40" stroke="#2c64d6" stroke-width="1.55"/><path d="M4.5 7.6L6.6 9.6L10.5 5.6" fill="none" stroke="#3a72e0" stroke-width="1.4"/></svg>
<span class="t " style="left:421.87px;top:761.43px;font-size:16px;font-weight:400;color:#ffffff;letter-spacing:0.788px;font-family:'Liberation Sans', sans-serif;-webkit-text-stroke:0.22px #fff;">Add error tracking with Sentry integration</span>
<div class="b" style="left:963.00px;top:754.05px;width:60.00px;height:27.50px;background:rgba(125,128,136,0.13);border:1px solid #787c85;border-radius:14px;box-sizing:border-box"></div>
<span class="t " style="left:974.30px;top:762.41px;font-size:13.6px;font-weight:400;color:#787c85;letter-spacing:0.525px;font-family:'Liberation Sans', sans-serif;-webkit-text-stroke:0.3px #787c85;">To Do</span>
<span class="t " style="left:1111.94px;top:759.83px;font-size:15.5px;font-weight:400;color:#f5a92e;letter-spacing:0.879px;font-family:'Liberation Sans', sans-serif;-webkit-text-stroke:0.65px #f5a92e;">Medium</span>
<span class="t " style="left:1364.00px;top:760.79px;font-size:14.6px;font-weight:400;color:#c4c4c4;letter-spacing:0.282px;font-family:'DejaVu Sans Mono', 'Liberation Mono', monospace;">nimbalyst-local/tracker/tasks.md</span>
</div>
</section>
</main>
</body></html>
